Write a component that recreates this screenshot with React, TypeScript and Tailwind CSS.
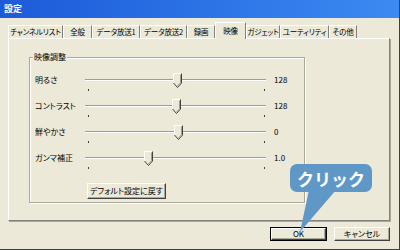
const tabs = [
  { label: "チャンネルリスト", w: "w-[55px]" },
  { label: "全般", w: "w-[29px]" },
  { label: "データ放送1", w: "w-[48px]" },
  { label: "データ放送2", w: "w-[47px]" },
  { label: "録画", w: "w-[28px]" },
  { label: "映像", w: "w-[31px]", active: true },
  { label: "ガジェット", w: "w-[34px]" },
  { label: "ユーティリティ", w: "w-[49px]" },
  { label: "その他", w: "w-[28px]" },
];

const rows = [
  { label: "明るさ", pos: 88, value: "128" },
  { label: "コントラスト", pos: 87, value: "128" },
  { label: "鮮やかさ", pos: 89, value: "0" },
  { label: "ガンマ補正", pos: 59, value: "1.0" },
];

function Thumb() {
  return (
    <svg width="9" height="15" viewBox="0 0 9 15">
      <polygon points="0.5,0.5 8.5,0.5 8.5,10 4.5,14.5 0.5,10" fill="#ece9d8" />
      <polyline points="0.5,10 0.5,0.5 8.5,0.5" fill="none" stroke="#ffffff" />
      <polyline points="8.5,0.5 8.5,10 4.5,14.5 0.5,10" fill="none" stroke="#404040" />
      <polyline points="7.5,1.5 7.5,9.6 4.5,13" fill="none" stroke="#9d9d93" />
    </svg>
  );
}

function Slider({ pos }: { pos: number }) {
  return (
    <div className="relative w-[181px] h-[20px]">
      <div className="absolute left-0 right-0 top-[6px] h-[2px] border-t border-t-[#9d9d93] border-b border-b-white" />
      <div className="absolute top-0" style={{ left: pos }}>
        <Thumb />
      </div>
      <div className="absolute left-[3px] top-[16px] w-px h-[2px] bg-[#404040]" />
      <div className="absolute left-[179px] top-[16px] w-px h-[2px] bg-[#404040]" />
    </div>
  );
}

export default function App() {
  return (
    <div className="relative w-[400px] h-[250px] overflow-hidden bg-[#ece9d8] border-r border-b border-[#404040] text-black text-[8px] [font-family:'Noto_Sans_CJK_JP',sans-serif] [font-feature-settings:'palt']">
      {/* title */}
      <div className="h-[18px] flex items-center pl-[4px] bg-gradient-to-r from-[#1d5ad8] to-[#3c8af2] text-white text-[9px] font-bold">
        設定
      </div>

      {/* tabs */}
      <div className="h-[20px] pl-[8px] flex items-end">
        {tabs.map((t) => (
          <div
            key={t.label}
            className={`${t.w} shrink-0 ${t.active ? "h-[17px] -mb-px bg-[#ece9d8] relative" : "h-[13px]"} flex items-center justify-center whitespace-nowrap text-[7.5px] tracking-[-0.2px] leading-none border-t border-l border-t-white border-l-white border-r border-r-[#808080]`}
          >
            {t.label}
          </div>
        ))}
      </div>

      {/* panel */}
      <div className="ml-[8px] w-[382px] h-[183px] border-t border-l border-t-white border-l-white border-r border-b border-r-[#808080] border-b-[#808080] shadow-[1px_1px_0_#aca899] pl-[20px] pt-[18px]">
        <div className="relative w-[276px] h-[146px] border border-[#aca899] shadow-[inset_1px_1px_0_#fff,1px_1px_0_#fff] pt-[15px]">
          <span className="absolute left-[3px] -top-[6px] px-[1px] bg-[#ece9d8] leading-[10px]">映像調整</span>
          {rows.map((r) => (
            <div key={r.label} className="h-[26px] flex items-start pl-[5px]">
              <div className="w-[50px] leading-[14px] whitespace-nowrap">{r.label}</div>
              <Slider pos={r.pos} />
              <div className="ml-[8px] leading-[14px]">{r.value}</div>
            </div>
          ))}
          <button className="mt-[6px] ml-[57px] w-[79px] h-[16px] flex items-center justify-center whitespace-nowrap leading-none border border-t-white border-l-white border-r-[#404040] border-b-[#404040] shadow-[inset_-1px_-1px_0_#aca899]">
            デフォルト設定に戻す
          </button>
        </div>
      </div>

      {/* bottom buttons */}
      <div className="mt-[6px] pr-[9px] flex justify-end gap-[7px]">
        <button className="w-[57px] h-[14px] border border-black flex">
          <span className="flex-1 flex items-center justify-center leading-none border border-t-white border-l-white border-r-[#404040] border-b-[#404040] shadow-[inset_-1px_-1px_0_#aca899]">
            OK
          </span>
        </button>
        <button className="w-[56px] h-[14px] flex items-center justify-center leading-none whitespace-nowrap border border-t-white border-l-white border-r-[#404040] border-b-[#404040] shadow-[inset_-1px_-1px_0_#aca899]">
          キャンセル
        </button>
      </div>

      {/* callout */}
      <svg className="absolute left-0 top-0" width="400" height="250" viewBox="0 0 400 250">
        <polygon points="309,190 336,190 300,232" fill="#5f97c7" />
      </svg>
      <div className="absolute left-[290px] top-[164px] w-[82px] h-[28px] rounded-[7px] bg-[#5f97c7] flex items-center justify-center text-white text-[17px] font-bold leading-none [font-feature-settings:normal]">
        クリック
      </div>
    </div>
  );
}
